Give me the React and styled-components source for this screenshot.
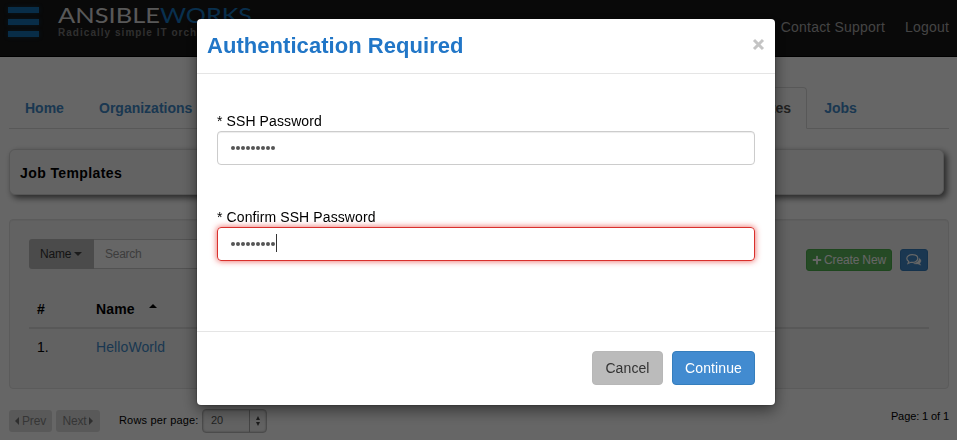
import React from "react";
import styled, { createGlobalStyle } from "styled-components";
import { FaPlus } from "react-icons/fa";

const GlobalStyle = createGlobalStyle`
  * { box-sizing: border-box; }
  body {
    margin: 0;
    background: #fff;
    color: #000;
    font: 14px/20px "Liberation Sans", Arial, sans-serif;
    overflow: hidden;
  }
`;

const Page = styled.div`
  height: 440px;
  overflow: hidden;
`;

const Navbar = styled.header`
  display: flex;
  height: 57px;
  padding: 7px 8px 0;
  background: #171717;
  border-bottom: 1px solid #000;
`;

const Menu = styled.div`
  display: flex;
  flex-direction: column;
  gap: 6px;
  width: 31px;
  margin-right: 19px;
`;

const MenuBar = styled.span`
  height: 6px;
  background: #1670b5;
  box-shadow: 0 0 4px rgba(23, 120, 195, 0.35);
`;

const Brand = styled.div`
  display: flex;
  flex-direction: column;
  flex: 1;
`;

const LogoMark = styled.svg`
  display: block;
  width: 200px;
  height: 18px;
  overflow: visible;
  font-family: Lato, sans-serif;
  font-size: 21.5px;
`;

const Tagline = styled.span`
  width: 139px;
  overflow: hidden;
  font-size: 10px;
  font-weight: bold;
  line-height: 15px;
  letter-spacing: 1.03px;
  color: #777;
  white-space: nowrap;
`;

const NavLinks = styled.nav`
  display: flex;
  gap: 20px;
  padding-top: 10px;
`;

const NavLink = styled.a`
  font-size: 14px;
  letter-spacing: 0.2px;
  color: #aaa;
`;

const Content = styled.main`
  padding: 30px 8px 0 9px;
`;

const Tabs = styled.div`
  display: flex;
  height: 42px;
  border-bottom: 1px solid #ddd;
`;

const Tab = styled.a`
  height: 42px;
  width: ${(p) => p.$width};
  padding: 10px 15px;
  border: 1px solid ${(p) => (p.$active ? "#ddd" : "transparent")};
  border-bottom-color: ${(p) => (p.$active ? "#fff" : "transparent")};
  border-radius: 4px 4px 0 0;
  color: ${(p) => (p.$active ? "#555" : "#428bca")};
  font-weight: bold;
  text-align: ${(p) => (p.$active ? "right" : "left")};
  white-space: nowrap;
`;

const Heading = styled.h1`
  width: 935px;
  height: 46px;
  margin: 20px 0 24px;
  padding: 13px 10px;
  border: 1px solid #d8d8d8;
  border-radius: 6px;
  background: #f8f8f8;
  box-shadow: 3px 3px 6px 0 #666;
  font-size: 14px;
  line-height: 20px;
  letter-spacing: 0.4px;
`;

const Well = styled.section`
  height: 170px;
  padding: 19px;
  border: 1px solid #e3e3e3;
  border-radius: 4px;
  background: #f5f5f5;
  box-shadow: inset 0 1px 1px rgba(0, 0, 0, 0.05);
`;

const Toolbar = styled.div`
  display: flex;
  height: 50px;
  padding-right: 1px;
`;

const FilterButton = styled.button`
  display: flex;
  align-items: center;
  gap: 3px;
  width: 65px;
  height: 30px;
  padding: 0 0 0 11px;
  border: 0;
  border-radius: 3px 0 0 3px;
  background: #bbb;
  color: #333;
  font: 12px "Liberation Sans", Arial, sans-serif;
  letter-spacing: -0.2px;
`;

const Caret = styled.span`
  border: 4px solid transparent;
  border-bottom-width: ${(p) => (p.$up ? "4px" : "0")};
  border-top-width: ${(p) => (p.$up ? "0" : "4px")};
  border-top-color: ${(p) => (p.$up ? "transparent" : "#444")};
  border-bottom-color: ${(p) => (p.$up ? "#000" : "transparent")};
`;

const Search = styled.input`
  width: 226px;
  height: 30px;
  margin-right: auto;
  padding: 0 11px;
  border: 1px solid #ccc;
  border-left: 0;
  background: #fff;
  font: 12px "Liberation Sans", Arial, sans-serif;
  letter-spacing: -0.25px;
  &::placeholder { color: #999; opacity: 1; }
`;

const Action = styled.button`
  display: flex;
  align-items: center;
  justify-content: center;
  gap: 2px;
  width: ${(p) => p.$width};
  height: 22px;
  margin: 10px 0 0 8px;
  padding: 0;
  border: 1px solid ${(p) => p.$edge};
  border-radius: 3px;
  background: ${(p) => p.$fill};
  color: #fff;
  font: 12px "Liberation Sans", Arial, sans-serif;
  letter-spacing: -0.15px;
  white-space: nowrap;
`;

const Row = styled.div`
  display: grid;
  grid-template-columns: 59px 1fr;
  height: ${(p) => (p.$head ? "40px" : "38px")};
  padding: ${(p) => (p.$head ? "10px" : "8px")} 8px;
  border-bottom: ${(p) => (p.$head ? "2px solid #ddd" : "0")};
  font-weight: ${(p) => (p.$head ? "bold" : "normal")};
`;

const NameCell = styled.div`
  display: flex;
  align-items: flex-start;
  gap: 14px;
  color: ${(p) => (p.$link ? "#428bca" : "#000")};
  letter-spacing: ${(p) => (p.$link ? "0.1px" : "0.15px")};
  & > ${Caret} { margin-top: 5px; }
`;

const Pager = styled.footer`
  display: flex;
  align-items: center;
  height: 24px;
  margin-top: 20px;
  font-size: 11px;
`;

const PageButton = styled.button`
  display: flex;
  align-items: center;
  gap: 3px;
  justify-content: center;
  width: ${(p) => p.$width};
  height: 22px;
  margin-right: 4px;
  padding: 0;
  border: 0;
  border-radius: 3px;
  background: #dfdfdf;
  color: #888;
  font: 12px "Liberation Sans", Arial, sans-serif;
  letter-spacing: -0.2px;
`;

const Arrow = styled.span`
  border: 4px solid transparent;
  border-left-width: ${(p) => (p.$left ? "0" : "4px")};
  border-right-width: ${(p) => (p.$left ? "4px" : "0")};
  border-left-color: ${(p) => (p.$left ? "transparent" : "#777")};
  border-right-color: ${(p) => (p.$left ? "#777" : "transparent")};
`;

const RowsLabel = styled.span`
  width: 79px;
  margin: -2px 4px 0 15px;
  letter-spacing: 0.18px;
  white-space: nowrap;
`;

const Spinner = styled.div`
  display: flex;
  width: 65px;
  height: 24px;
  border: 1px solid #bbb;
  border-radius: 4px;
  box-shadow: inset 0 0 2px #999;
  background: #f4f4f4;
  color: #555;
`;

const SpinnerValue = styled.span`
  flex: 1;
  padding-left: 8px;
  line-height: 21px;
`;

const SpinnerArrows = styled.span`
  display: flex;
  flex-direction: column;
  align-items: center;
  justify-content: center;
  gap: 2px;
  width: 17px;
  border-left: 1px solid #aaa;
  & > ${Caret} {
    border-left-width: 2.5px;
    border-right-width: 2.5px;
    border-top-color: ${"#444"};
  }
  & > ${Caret}:first-child {
    border-top-color: transparent;
    border-bottom-color: #444;
  }
`;

const PageInfo = styled.span`
  margin: -10px 0 0 auto;
  letter-spacing: -0.1px;
`;

const Backdrop = styled.div`
  position: fixed;
  inset: 0;
  padding-top: 19px;
  background: rgba(0, 0, 0, 0.6);
`;

const Dialog = styled.div`
  width: 578px;
  height: 386px;
  margin-left: 197px;
  border-radius: 4px;
  background: #fff;
  box-shadow: 0 5px 15px rgba(0, 0, 0, 0.5), 0 0 2px rgba(0, 0, 0, 0.5);
`;

const DialogHeader = styled.div`
  display: flex;
  justify-content: space-between;
  height: 55px;
  padding: 13px 10px 0;
  border-bottom: 1px solid #e5e5e5;
`;

const DialogTitle = styled.h2`
  margin: 0;
  color: #2176c7;
  font-size: 22px;
  line-height: 28px;
  letter-spacing: 0.05px;
`;

const CloseIcon = styled.svg`
  width: 13px;
  height: 13px;
  margin-top: 6px;
`;

const DialogBody = styled.div`
  height: 257px;
  padding: 37px 20px 0;
`;

const Field = styled.div`
  height: 96px;
`;

const Label = styled.label`
  display: block;
  height: 20px;
  line-height: 21px;
  letter-spacing: 0.1px;
`;

const Password = styled.div`
  display: flex;
  align-items: center;
  gap: 1px;
  height: 34px;
  padding-left: 13px;
  border: 1px solid ${(p) => (p.$focused ? "#d9302c" : "#ccc")};
  border-radius: 4px;
  box-shadow: ${(p) =>
    p.$focused ? "0 0 6px rgba(229, 40, 35, 0.75)" : "inset 0 1px 1px rgba(0, 0, 0, 0.075)"};
`;

const Dot = styled.span`
  width: 4px;
  height: 4px;
  border-radius: 50%;
  background: #555;
`;

const Cursor = styled.span`
  width: 1px;
  height: 18px;
  margin: -2px 0 0 0;
  background: #333;
`;

const DialogFooter = styled.div`
  display: flex;
  justify-content: flex-end;
  gap: 9px;
  height: 74px;
  padding: 19px 20px;
  border-top: 1px solid #e5e5e5;
`;

const DialogButton = styled.button`
  width: ${(p) => (p.$primary ? "83px" : "71px")};
  height: 34px;
  padding: 0;
  border: 1px solid ${(p) => (p.$primary ? "#357ebd" : "#b7b7b7")};
  border-radius: 4px;
  background: ${(p) => (p.$primary ? "#428bd0" : "#bbb")};
  color: ${(p) => (p.$primary ? "#fff" : "#333")};
  font: 14px "Liberation Sans", Arial, sans-serif;
  letter-spacing: 0.1px;
`;

function Comments() {
  return (
    <svg width="16" height="14" viewBox="0 0 16 14" fill="none" stroke="#fff" strokeWidth="1.2">
      <path d="M6.200 1.700C3.200 1.700.8 3.300.8 5.500c0 1.200.8 2.300 2 3L2 10.500l3-1.200c4 .5 6.800-1.500 6.800-3.800S9.300 1.700 6.200 1.700Z" />
      <path d="M13.300 5.200c2.300 1.500 2.300 3.600.4 5l1.100 2-2.800-1.200c-2 .3-3.400 0-4.500-.7 3.300-.3 5.500-2 5.800-5.100Z" fill="#fff" strokeWidth=".3" />
    </svg>
  );
}

function PasswordField({ label, focused }) {
  return (
    <Field>
      <Label>{label}</Label>
      <Password $focused={focused}>
        {Array.from({ length: 9 }, (_, i) => <Dot key={i} />)}
        {focused && <Cursor />}
      </Password>
    </Field>
  );
}

export default function App() {
  return (
    <>
      <GlobalStyle />
      <Page>
        <Navbar>
          <Menu><MenuBar /><MenuBar /><MenuBar /></Menu>
          <Brand>
            <LogoMark viewBox="0 0 200 18">
              <text x="0" y="16" fill="#ddd" textLength="102" lengthAdjust="spacingAndGlyphs">ANSIBLE</text>
              <text x="102" y="16" fill="#1778c3" textLength="92" lengthAdjust="spacingAndGlyphs">WORKS</text>
            </LogoMark>
            <Tagline>Radically simple IT orch</Tagline>
          </Brand>
          <NavLinks>
            <NavLink>Contact Support</NavLink>
            <NavLink>Logout</NavLink>
          </NavLinks>
        </Navbar>
        <Content>
          <Tabs>
            <Tab $width="74px">Home</Tab>
            <Tab $width="564px">Organizations</Tab>
            <Tab $active $width="160px">Job Templates</Tab>
            <Tab $width="80px">&#8202;Jobs</Tab>
          </Tabs>
          <Heading>Job Templates</Heading>
          <Well>
            <Toolbar>
              <FilterButton>Name <Caret /></FilterButton>
              <Search placeholder="Search" />
              <Action $width="86px" $fill="#5cb85c" $edge="#4cae4c"><FaPlus size={10} />Create New</Action>
              <Action $width="28px" $fill="#428bca" $edge="#357ebd"><Comments /></Action>
            </Toolbar>
            <Row $head><span>#</span><NameCell>Name <Caret $up /></NameCell></Row>
            <Row><span>1.</span><NameCell $link>HelloWorld</NameCell></Row>
          </Well>
          <Pager>
            <PageButton $width="43px"><Arrow $left />Prev</PageButton>
            <PageButton $width="44px">Next<Arrow /></PageButton>
            <RowsLabel>Rows per page:</RowsLabel>
            <Spinner>
              <SpinnerValue>20</SpinnerValue>
              <SpinnerArrows><Caret $up /><Caret /></SpinnerArrows>
            </Spinner>
            <PageInfo>Page: 1 of 1</PageInfo>
          </Pager>
        </Content>
      </Page>
      <Backdrop>
        <Dialog>
          <DialogHeader>
            <DialogTitle>Authentication Required</DialogTitle>
            <CloseIcon viewBox="0 0 13 13" stroke="#c4c4c4" strokeWidth="3">
              <path d="M2 2l9 9M11 2l-9 9" />
            </CloseIcon>
          </DialogHeader>
          <DialogBody>
            <PasswordField label="* SSH Password" />
            <PasswordField label="* Confirm SSH Password" focused />
          </DialogBody>
          <DialogFooter>
            <DialogButton>Cancel</DialogButton>
            <DialogButton $primary>Continue</DialogButton>
          </DialogFooter>
        </Dialog>
      </Backdrop>
    </>
  );
}
